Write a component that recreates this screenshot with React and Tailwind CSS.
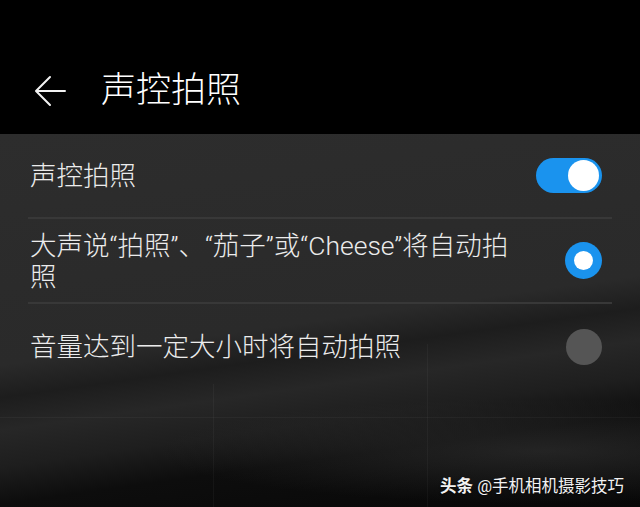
import React from "react";

const fontStack = { fontFamily: '"Roboto", "Noto Sans CJK SC", sans-serif' };

function BackArrow() {
  return (
    <svg width="32" height="32" viewBox="0 0 32 32" fill="none" aria-hidden="true">
      <path d="M31 16H3M16 2L2 16l14 14" stroke="#f2f2f2" strokeWidth="2" strokeLinecap="round" strokeLinejoin="round" />
    </svg>
  );
}

function Toggle() {
  return (
    <span className="flex h-[35px] w-[66px] items-center justify-end rounded-full bg-[#1a93ee] px-[3px]">
      <span className="h-[31px] w-[31px] rounded-full bg-white" />
    </span>
  );
}

function RadioOn() {
  return (
    <span className="flex h-[37px] w-[37px] items-center justify-center rounded-full bg-[#1a93ee]">
      <span className="h-[19px] w-[19px] rounded-full bg-white" />
    </span>
  );
}

function RadioOff() {
  return <span className="block h-[36px] w-[36px] rounded-full bg-[#555555]" />;
}

const rows = [
  { id: "voice", label: "声控拍照", control: <Toggle /> },
  { id: "keyword", label: "大声说“拍照”、“茄子”或“Cheese”将自动拍照", control: <RadioOn /> },
  { id: "volume", label: "音量达到一定大小时将自动拍照", control: <RadioOff /> }
];

export default function App() {
  return (
    <div className="flex h-[507px] w-[640px] flex-col overflow-hidden bg-black" style={fontStack}>
      <header className="flex h-[134px] shrink-0 items-end bg-black pb-[26px]">
        <div className="flex items-center">
          <span className="ml-[34px] flex h-[32px] w-[32px] items-center">
            <BackArrow />
          </span>
          <h1 className="ml-[35px] text-[35px] leading-none font-light text-white">声控拍照</h1>
        </div>
      </header>

      <main className="relative flex-1 bg-[radial-gradient(60%_14%_at_85%_85%,rgba(60,60,60,0.5),transparent),linear-gradient(172deg,#2d2d2d_0%,#2a2a2a_50%,#1d1d1d_57%,#272727_64%,#1e1e1e_72%,#0d0d0d_80%,#070707_100%)]">
        {/* viewfinder grid behind the sheet */}
        <div className="pointer-events-none absolute bottom-0 left-[213px] top-[250px] w-px bg-white/[0.035]" />
        <div className="pointer-events-none absolute bottom-0 left-[427px] top-[210px] w-px bg-white/[0.035]" />
        <div className="pointer-events-none absolute inset-x-0 top-[283px] h-px bg-white/[0.035]" />

        <ul className="relative mx-[28px]">
          {rows.map((row, i) => (
            <li
              key={row.id}
              className={
                i < rows.length - 1
                  ? "flex h-[85px] items-center justify-between gap-[30px] border-b-2 border-[#383838] pl-[2px] pr-[10px]"
                  : "flex h-[85px] items-center justify-between gap-[30px] pl-[2px] pr-[10px]"
              }
            >
              <span className="max-w-[490px] text-[26.5px] leading-[31px] font-light text-[#ececec]">{row.label}</span>
              {row.control}
            </li>
          ))}
        </ul>

        <div className="absolute bottom-[12px] right-[16px] text-[16.5px] leading-none text-[#f2f2f2] [text-shadow:0_1px_2px_rgba(0,0,0,0.6)]">
          <span className="font-bold">头条</span> @手机相机摄影技巧
        </div>
      </main>
    </div>
  );
}
